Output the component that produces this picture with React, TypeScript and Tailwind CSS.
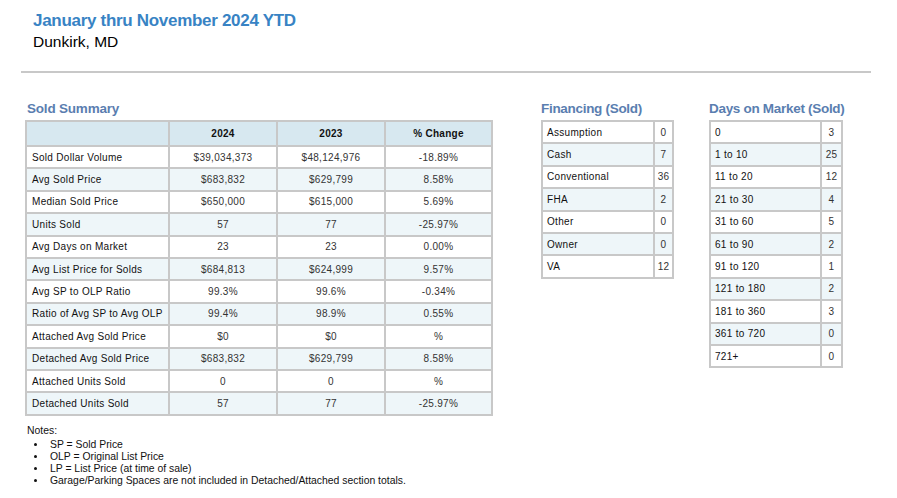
const summary = [
  ["Sold Dollar Volume", "$39,034,373", "$48,124,976", "-18.89%"],
  ["Avg Sold Price", "$683,832", "$629,799", "8.58%"],
  ["Median Sold Price", "$650,000", "$615,000", "5.69%"],
  ["Units Sold", "57", "77", "-25.97%"],
  ["Avg Days on Market", "23", "23", "0.00%"],
  ["Avg List Price for Solds", "$684,813", "$624,999", "9.57%"],
  ["Avg SP to OLP Ratio", "99.3%", "99.6%", "-0.34%"],
  ["Ratio of Avg SP to Avg OLP", "99.4%", "98.9%", "0.55%"],
  ["Attached Avg Sold Price", "$0", "$0", "%"],
  ["Detached Avg Sold Price", "$683,832", "$629,799", "8.58%"],
  ["Attached Units Sold", "0", "0", "%"],
  ["Detached Units Sold", "57", "77", "-25.97%"],
];

const financing = [
  ["Assumption", "0"],
  ["Cash", "7"],
  ["Conventional", "36"],
  ["FHA", "2"],
  ["Other", "0"],
  ["Owner", "0"],
  ["VA", "12"],
];

const daysOnMarket = [
  ["0", "3"],
  ["1 to 10", "25"],
  ["11 to 20", "12"],
  ["21 to 30", "4"],
  ["31 to 60", "5"],
  ["61 to 90", "2"],
  ["91 to 120", "1"],
  ["121 to 180", "2"],
  ["181 to 360", "3"],
  ["361 to 720", "0"],
  ["721+", "0"],
];

const notes = [
  "SP = Sold Price",
  "OLP = Original List Price",
  "LP = List Price (at time of sale)",
  "Garage/Parking Spaces are not included in Detached/Attached section totals.",
];

function SmallTable({ title, rows, w1, w2 }: { title: string; rows: string[][]; w1: string; w2: string }) {
  return (
    <div>
      <h2 className="text-[13.5px] font-bold leading-[18px] text-[#5a7eb0] tracking-[-0.3px]">{title}</h2>
      <table className="mt-[2px] border-collapse border-2 border-[#c8c8c8] text-[10px] tracking-[0.3px] text-[#111]">
        <tbody>
          {rows.map((r, i) => (
            <tr key={i} className={`h-[22.4px] ${i % 2 === 1 ? "bg-[#eef6f9]" : "bg-white"}`}>
              <td className={`${w1} border-2 border-[#c8c8c8] px-[4px] py-0`}>{r[0]}</td>
              <td className={`${w2} border-2 border-[#c8c8c8] px-0 py-0 text-center text-[#333]`}>{r[1]}</td>
            </tr>
          ))}
        </tbody>
      </table>
    </div>
  );
}

export default function App() {
  return (
    <div className="w-[897px] h-[498px] bg-white font-['Liberation_Sans',Arial,sans-serif] overflow-hidden">
      <div className="pt-[10px] pl-[33px]">
        <h1 className="text-[17px] font-bold leading-[22px] tracking-[-0.3px] text-[#3883c4]">January thru November 2024 YTD</h1>
        <p className="text-[15.5px] leading-[20px] text-black">Dunkirk, MD</p>
      </div>
      <div className="ml-[21px] mt-[19px] w-[850px] h-[2px] bg-[#c8c8c8]" />

      <div className="flex items-start mt-[27px] pl-[25px]">
        <div>
          <h2 className="pl-[2px] text-[13.5px] font-bold leading-[18px] text-[#5a7eb0] tracking-[-0.2px]">Sold Summary</h2>
          <table className="mt-[2px] border-collapse border-2 border-[#c8c8c8] text-[10px] tracking-[0.3px] text-[#111]">
            <thead>
              <tr className="h-[25px] bg-[#d7e8f0]">
                <th className="w-[143px] border-2 border-[#c8c8c8]" />
                <th className="w-[108px] border-2 border-[#c8c8c8] font-bold">2024</th>
                <th className="w-[108px] border-2 border-[#c8c8c8] font-bold">2023</th>
                <th className="w-[107px] border-2 border-[#c8c8c8] font-bold">% Change</th>
              </tr>
            </thead>
            <tbody>
              {summary.map((r, i) => (
                <tr key={i} className={`h-[22.4px] ${i % 2 === 1 ? "bg-[#eef6f9]" : "bg-white"}`}>
                  <td className="border-2 border-[#c8c8c8] px-[5px] py-0">{r[0]}</td>
                  <td className="border-2 border-[#c8c8c8] py-0 text-center text-[#333]">{r[1]}</td>
                  <td className="border-2 border-[#c8c8c8] py-0 text-center text-[#333]">{r[2]}</td>
                  <td className="border-2 border-[#c8c8c8] py-0 text-center text-[#333]">{r[3]}</td>
                </tr>
              ))}
            </tbody>
          </table>
        </div>

        <div className="ml-[48px]">
          <SmallTable title="Financing (Sold)" rows={financing} w1="w-[112px]" w2="w-[19px]" />
        </div>

        <div className="ml-[35px]">
          <SmallTable title="Days on Market (Sold)" rows={daysOnMarket} w1="w-[111px]" w2="w-[21px]" />
        </div>
      </div>

      <div className="pl-[27px] mt-[9px] text-[10.4px] leading-[12px] text-[#111]">
        <p>Notes:</p>
        <ul className="list-disc pl-[20px] mt-[2px]">
          {notes.map((n) => (
            <li key={n} className="pl-[3px]">{n}</li>
          ))}
        </ul>
      </div>
    </div>
  );
}
